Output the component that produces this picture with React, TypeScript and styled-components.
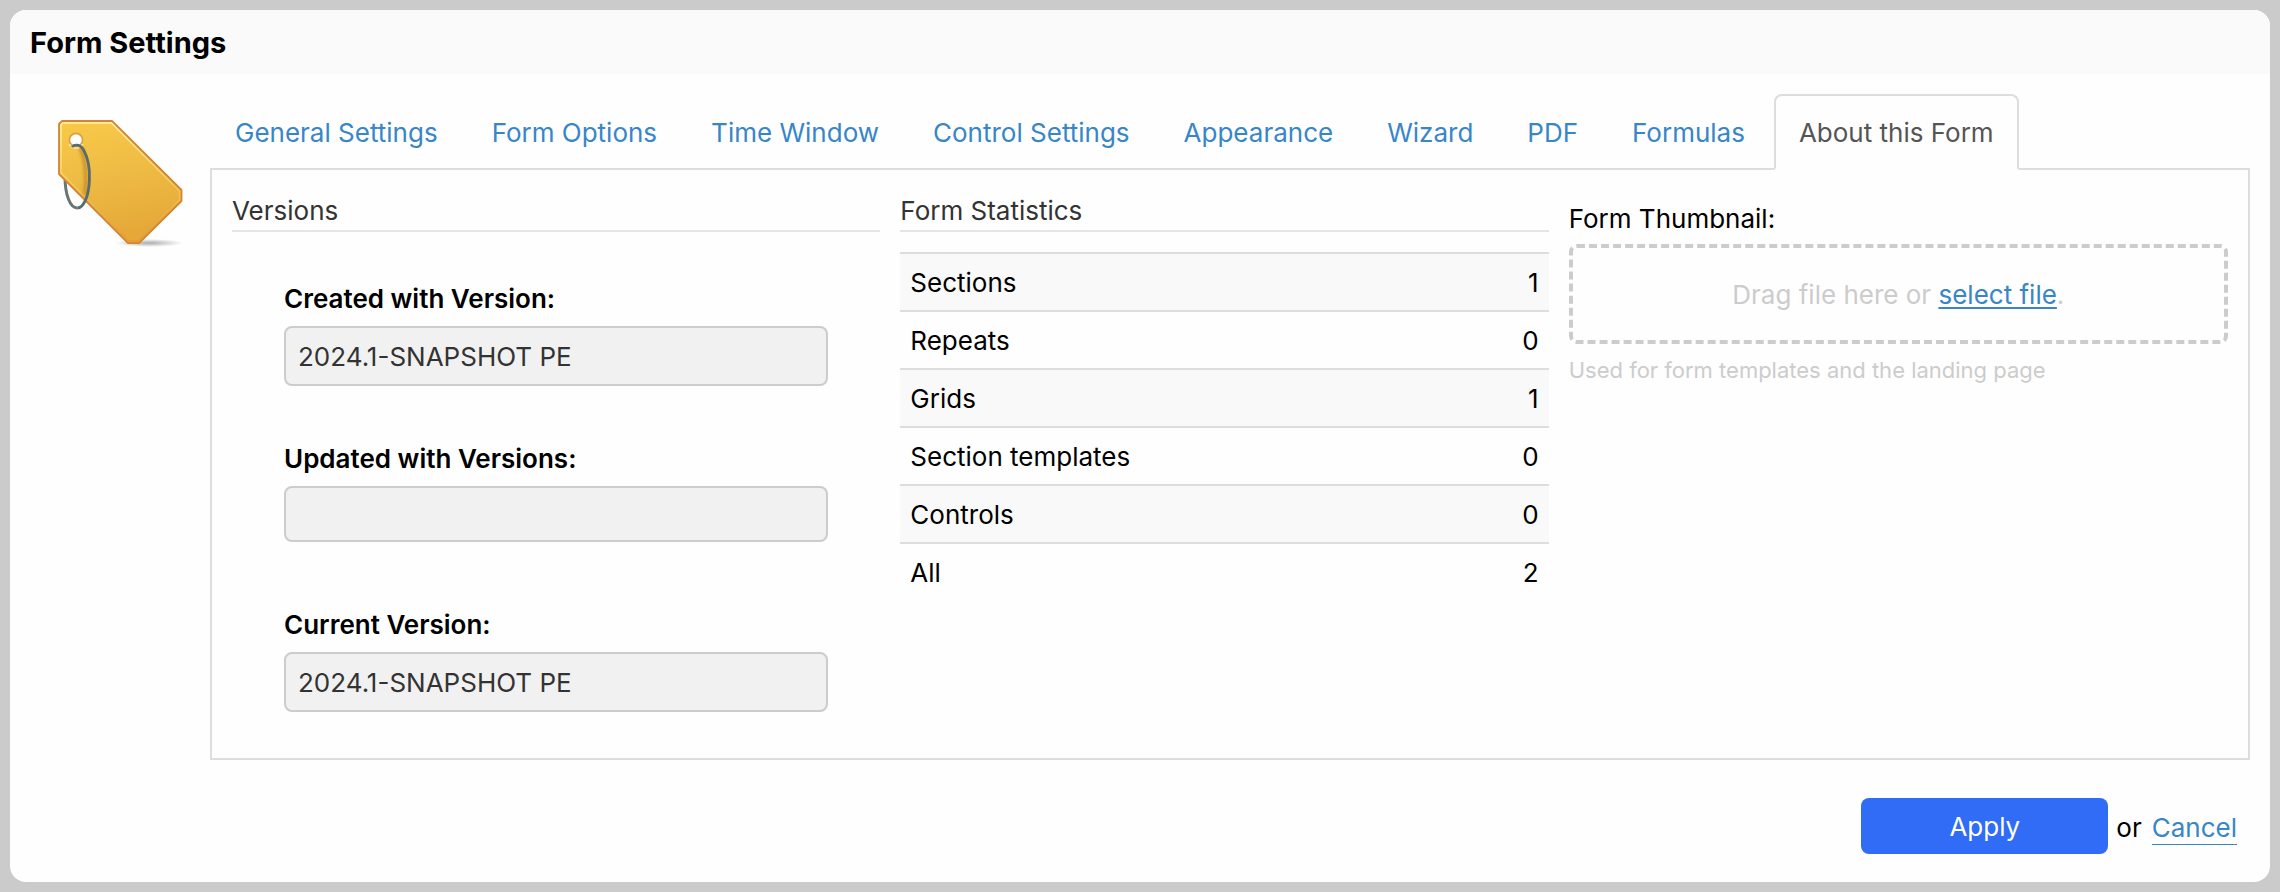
import React, { useState } from 'react';
import styled, { createGlobalStyle } from 'styled-components';

const GlobalStyle = createGlobalStyle`
  *, *::before, *::after { box-sizing: border-box; }
  html, body, #root { height: 100%; }
  body {
    margin: 0;
    background: #cbcbcb;
    color: #000;
    font-family: Inter, "Liberation Sans", sans-serif;
    font-size: 26px;
    line-height: 40px;
  }
`;

const Page = styled.div`
  min-height: 100%;
  padding: 10px;
  display: flex;
`;

const Dialog = styled.section`
  flex: 1;
  display: flex;
  flex-direction: column;
  background: #fefefe;
  border-radius: 16px;
  overflow: hidden;
`;

const DialogHeader = styled.header`
  padding: 13px 20px 11px;
  background: #fafafa;
`;

const Title = styled.h1`
  margin: 0;
  font-size: 29px;
  font-weight: 700;
  line-height: 40px;
`;

const Body = styled.div`
  display: flex;
  padding: 20px 20px 0 46px;
`;

const IconBox = styled.div`
  flex: none;
  width: 154px;
  padding-top: 25px;
`;

const Main = styled.div`
  flex: 1;
  min-width: 0;
`;

const TabList = styled.div`
  display: flex;
  gap: 4px;
`;

const Tab = styled.button<{ $active: boolean }>`
  height: 76px;
  margin-bottom: -2px;
  padding: 2px 23px 0;
  border: 2px solid ${p => (p.$active ? '#ddd' : 'transparent')};
  border-bottom: 2px solid ${p => (p.$active ? '#fefefe' : 'transparent')};
  border-radius: 8px 8px 0 0;
  background: ${p => (p.$active ? '#fefefe' : 'transparent')};
  background-clip: padding-box;
  color: ${p => (p.$active ? '#555' : '#3886c8')};
  font: inherit;
  white-space: nowrap;
  cursor: pointer;
`;

const Panel = styled.div`
  display: grid;
  grid-template-columns: 59fr 59fr 60fr;
  gap: 20px;
  padding: 20px 20px 46px;
  border: 2px solid #ddd;
`;

const Heading = styled.h2`
  margin: 0;
  padding-top: 2px;
  border-bottom: 2px solid #e5e5e5;
  color: #333;
  font-size: 26px;
  font-weight: 400;
  line-height: 38px;
`;

const Versions = styled.div`
  display: flex;
  flex-direction: column;
  gap: 53px;
  padding: 47px 52px 0;
`;

const Field = styled.div`
  display: flex;
  flex-direction: column;
  gap: 7px;
`;

const Label = styled.label`
  font-weight: 600;
`;

const Input = styled.input`
  height: 60px;
  width: 100%;
  padding: 0 12px;
  border: 2px solid #ccc;
  border-radius: 8px;
  background: #f1f1f1;
  color: #333;
  font: inherit;
  outline: none;

  &:placeholder-shown {
    height: 56px;
    margin-bottom: 10px;
  }
`;

const Table = styled.table`
  width: 100%;
  margin-top: 20px;
  border-collapse: separate;
  border-spacing: 0;
`;

const Row = styled.tr`
  &:nth-child(odd) { background: #f9f9f9; }
`;

const NameCell = styled.th`
  padding: 9px 10px 7px;
  border-top: 2px solid #ddd;
  font-weight: 400;
  text-align: left;
`;

const CountCell = styled.td`
  padding: 9px 10px 7px;
  border-top: 2px solid #ddd;
  text-align: right;
`;

const Thumbnail = styled.div`
  padding-top: 9px;
`;

const ThumbnailLabel = styled.div`
  line-height: 40px;
`;

const DropZone = styled.div`
  display: flex;
  align-items: center;
  justify-content: center;
  height: 100px;
  margin-top: 5px;
  padding-top: 2px;
  border: 4px dashed #ccc;
  border-radius: 8px;
  color: #ccc;
  white-space: pre;
`;

const Link = styled.a`
  color: #3886c8;
  text-decoration: underline;
  text-decoration-thickness: 2px;
  text-underline-offset: 3px;
`;

const Hint = styled.p`
  margin: 6px 0 0;
  color: #ccc;
  font-size: 22px;
  line-height: 40px;
`;

const Footer = styled.footer`
  display: flex;
  align-items: center;
  justify-content: flex-end;
  padding: 38px 33px 28px;
`;

const ApplyButton = styled.button`
  width: 247px;
  height: 56px;
  padding: 2px 0 0;
  border: 0;
  border-radius: 8px;
  background: #306cf6;
  color: #fff;
  font: inherit;
  cursor: pointer;
`;

const Alternative = styled.span`
  display: flex;
  align-items: center;
  gap: 10px;
  padding: 4px 0 0 8px;
`;

const CancelLink = styled.a`
  border-bottom: 1px solid #3886c8;
  color: #3886c8;
  line-height: 32px;
  text-decoration: none;
`;

const TagIcon = () => (
  <svg width="128" height="130" viewBox="0 0 128 130" aria-hidden="true">
    <defs>
      <linearGradient id="tagFill" x1="0" y1="0" x2="0.2" y2="1">
        <stop offset="0" stopColor="#f8ca48" />
        <stop offset="0.5" stopColor="#eebb44" />
        <stop offset="1" stopColor="#e5a839" />
      </linearGradient>
      <linearGradient id="tagShine" x1="0" y1="0" x2="0" y2="1">
        <stop offset="0" stopColor="#fff0b0" />
        <stop offset="0.45" stopColor="#fbd867" stopOpacity="0.8" />
        <stop offset="1" stopColor="#dc9733" stopOpacity="0.6" />
      </linearGradient>
      <radialGradient id="groundShade">
        <stop offset="0" stopColor="#777" stopOpacity="0.6" />
        <stop offset="1" stopColor="#777" stopOpacity="0" />
      </radialGradient>
      <filter id="soft" x="-100%" y="-20%" width="300%" height="140%">
        <feGaussianBlur stdDeviation="1.6" />
      </filter>
    </defs>
    <ellipse cx="93" cy="124" rx="34" ry="4" fill="url(#groundShade)" />
    <path d="M21.3 26C14 26 9 40 9 57.7S14 89 21.3 89" fill="none" stroke="#667676" strokeWidth="3" />
    <path
      d="M6 2H56L125.5 71V82L83 124.2H72L3 55V5Z"
      fill="url(#tagFill)"
      stroke="#d38532"
      strokeWidth="1.8"
      strokeLinejoin="round"
    />
    <path
      d="M6.5 4H55.5L123.5 72V81L82 122H73L5 54V6Z"
      fill="none"
      stroke="url(#tagShine)"
      strokeWidth="1.6"
    />
    <path d="M24 28C30 40 31 60 29 76" fill="none" stroke="#ac7520" strokeWidth="4" opacity="0.55" filter="url(#soft)" />
    <circle cx="20" cy="21" r="7.4" fill="#dc9c3c" />
    <path d="M13 25A8.2 8.2 0 0 0 27 25" fill="none" stroke="#f7df92" strokeWidth="2" />
    <circle cx="20" cy="21" r="5.8" fill="#fefefe" />
    <path d="M16 28C18 25.5 24 24.5 27.6 31C32 39 34 50 33.4 61C33 76 28 89 21.3 89" fill="none" stroke="#596b6b" strokeWidth="2.8" />
  </svg>
);

const tabs = [
  'General Settings',
  'Form Options',
  'Time Window',
  'Control Settings',
  'Appearance',
  'Wizard',
  'PDF',
  'Formulas',
  'About this Form',
];

const versions = [
  { id: 'created', label: 'Created with Version:', value: '2024.1-SNAPSHOT PE' },
  { id: 'updated', label: 'Updated with Versions:', value: '' },
  { id: 'current', label: 'Current Version:', value: '2024.1-SNAPSHOT PE' },
];

const statistics: [string, number][] = [
  ['Sections', 1],
  ['Repeats', 0],
  ['Grids', 1],
  ['Section templates', 0],
  ['Controls', 0],
  ['All', 2],
];

export default function App() {
  const [active, setActive] = useState('About this Form');

  return (
    <>
      <GlobalStyle />
      <Page>
        <Dialog role="dialog" aria-labelledby="dialog-title">
          <DialogHeader>
            <Title id="dialog-title">Form Settings</Title>
          </DialogHeader>
          <Body>
            <IconBox>
              <TagIcon />
            </IconBox>
            <Main>
              <TabList role="tablist">
                {tabs.map(tab => (
                  <Tab
                    key={tab}
                    type="button"
                    role="tab"
                    aria-selected={tab === active}
                    $active={tab === active}
                    onClick={() => setActive(tab)}
                  >
                    {tab}
                  </Tab>
                ))}
              </TabList>
              <Panel role="tabpanel">
                <div>
                  <Heading>Versions</Heading>
                  <Versions>
                    {versions.map(({ id, label, value }) => (
                      <Field key={id}>
                        <Label htmlFor={id}>{label}</Label>
                        <Input id={id} value={value} placeholder=" " readOnly />
                      </Field>
                    ))}
                  </Versions>
                </div>
                <div>
                  <Heading>Form Statistics</Heading>
                  <Table>
                    <tbody>
                      {statistics.map(([name, count]) => (
                        <Row key={name}>
                          <NameCell scope="row">{name}</NameCell>
                          <CountCell>{count}</CountCell>
                        </Row>
                      ))}
                    </tbody>
                  </Table>
                </div>
                <Thumbnail>
                  <ThumbnailLabel>Form Thumbnail:</ThumbnailLabel>
                  <DropZone>
                    Drag file here or <Link href="#select">select file</Link>.
                  </DropZone>
                  <Hint>Used for form templates and the landing page</Hint>
                </Thumbnail>
              </Panel>
            </Main>
          </Body>
          <Footer>
            <ApplyButton type="button">Apply</ApplyButton>
            <Alternative>
              or <CancelLink href="#cancel">Cancel</CancelLink>
            </Alternative>
          </Footer>
        </Dialog>
      </Page>
    </>
  );
}
